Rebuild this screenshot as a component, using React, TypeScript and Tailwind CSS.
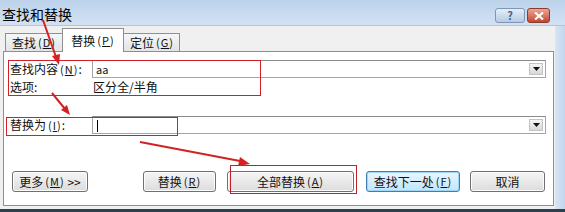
import type { ReactNode } from 'react';

const CJK = "font-['SimSun','Noto_Sans_CJK_SC',sans-serif]";

// letter with an underline, as in the Windows access keys
function Key({ k }: { k: string }) {
  return (
    <span className="ml-[2px] text-[11px] tracking-[1px]">
      (<span className="underline">{k}</span>)
    </span>
  );
}

function Btn({ children, className = '', focused = false }: { children: ReactNode; className?: string; focused?: boolean }) {
  return (
    <div
      className={`h-[21px] flex items-center justify-center rounded-[3px] border text-[12px] text-[#111] ${
        focused
          ? 'border-[#3c7fb1] bg-gradient-to-b from-[#eaf6fd] to-[#bee6fd] shadow-[inset_0_0_0_1px_#9fd6f7]'
          : 'border-[#707070] bg-gradient-to-b from-[#f6f6f6] to-[#dcdcdc] shadow-[inset_0_0_0_1px_#fcfcfc]'
      } ${className}`}
    >
      {children}
    </div>
  );
}

function Combo({ children }: { children?: ReactNode }) {
  return (
    <div className="flex-1 h-[18px] mr-[7px] flex items-center border border-[#a5a5a5] border-t-[#8a8a8a] bg-white pl-[3px] pr-[2px]">
      <div className="flex-1 text-[11px] leading-none">{children}</div>
      <div className="w-[14px] h-[12px] flex items-center justify-center border border-[#c4c4c4] bg-gradient-to-b from-[#f4f4f4] to-[#d8d8d8]">
        <svg width="7" height="4" viewBox="0 0 7 4">
          <path d="M0 0H7L3.5 4Z" fill="#111" />
        </svg>
      </div>
    </div>
  );
}

export default function App() {
  return (
    <div className={`relative w-[565px] h-[212px] overflow-hidden bg-[#cadcef] ${CJK}`}>
      {/* title bar */}
      <div className="h-[26px] flex items-start bg-gradient-to-b from-[#bcd3eb] to-[#d2e2f3] border-b border-[#b0c4da]">
        <span className="ml-[2px] mt-[4px] text-[14px] text-black">查找和替换</span>
        <div className="ml-auto mt-[8px] flex gap-[2px] mr-[15px]">
          <div className="w-[30px] h-[15px] rounded-[3px] border border-[#7f97b5] bg-gradient-to-b from-[#e4eef9] to-[#b5cbe3] flex items-center justify-center text-[11px] leading-none font-bold text-[#4a5f7a]">
            ?
          </div>
          <div className="w-[23px] h-[15px] rounded-[3px] border border-[#8c3b2f] bg-gradient-to-b from-[#e9a797] to-[#c5442b] flex items-center justify-center">
            <svg width="10" height="8" viewBox="0 0 10 8">
              <path d="M1 0.5L9 7.5M9 0.5L1 7.5" stroke="#fff" strokeWidth="2.2" />
            </svg>
          </div>
        </div>
      </div>

      <div className="flex h-[186px]">
        {/* dialog body */}
        <div className="w-[555px] bg-[#f0f0f0] pt-[2px] border-b-[3px] border-[#2c4150]">
          {/* tabs */}
          <div className="flex items-end h-[23px] pl-[5px] text-[12px] text-[#111]">
            <div className="w-[59px] h-[18px] flex items-center pl-[6px] overflow-hidden whitespace-nowrap border border-b-0 border-[#8e8f8f] bg-gradient-to-b from-[#f5f6f8] to-[#e1e4e8]">
              查找<Key k="D" />
            </div>
            <div className="relative z-10 -ml-[2px] -mb-px w-[62px] h-[24px] flex items-center justify-center border border-b-0 border-[#8e8f8f] bg-white">
              替换<Key k="P" />
            </div>
            <div className="w-[56px] h-[18px] flex items-center pl-[6px] border border-l-0 border-b-0 border-[#8e8f8f] bg-gradient-to-b from-[#f5f6f8] to-[#e1e4e8]">
              定位<Key k="G" />
            </div>
          </div>

          {/* panel */}
          <div className="ml-[3px] w-[551px] h-[155px] border border-[#8e8f8f] bg-white pl-[6px] text-[12px] text-[#111]">
            <div className="mt-[8px] h-[18px] flex items-center">
              <span className="w-[82px]">
                查找内容<Key k="N" />:
              </span>
              <Combo>aa</Combo>
            </div>
            <div className="mt-[1px] h-[16px] flex items-center">
              <span className="w-[82px]">选项:</span>
              <span className="pl-[1px]">区分全/半角</span>
            </div>
            <div className="mt-[21px] h-[18px] flex items-center">
              <span className="w-[82px]">
                替换为<Key k="I" />:
              </span>
              <Combo>
                <span className="inline-block w-px h-[12px] bg-black ml-[1px] align-middle" />
              </Combo>
            </div>
            <div className="mt-[37px] flex">
              <Btn className="ml-[2px] w-[76px]">
                更多<Key k="M" />&nbsp;&gt;&gt;
              </Btn>
              <Btn className="ml-[55px] w-[73px]">
                替换<Key k="R" />
              </Btn>
              <Btn className="ml-[11px] w-[127px]">
                全部替换<Key k="A" />
              </Btn>
              <Btn focused className="ml-[12px] w-[94px]">
                查找下一处<Key k="F" />
              </Btn>
              <Btn className="ml-[10px] w-[75px]">取消</Btn>
            </div>
          </div>
        </div>
        {/* right frame */}
        <div className="flex-1 bg-gradient-to-r from-[#d7e5f3] to-[#c2d6ec] border-b-[3px] border-[#2c4150]" />
      </div>

      {/* red annotation boxes */}
      <div className="absolute left-[8px] top-[60px] w-[253px] h-[36px] border border-[#d0202a]" />
      <div className="absolute left-[6px] top-[117px] w-[172px] h-[19px] border border-[#d0202a]" />
      <div className="absolute left-[230px] top-[165px] w-[127px] h-[29px] border border-[#c0202a]" />

      {/* red annotation arrows */}
      <svg className="absolute inset-0 pointer-events-none" width="565" height="212" viewBox="0 0 565 212">
        <g stroke="#d42222" strokeWidth="2" fill="#d42222">
          <line x1="43" y1="20" x2="56" y2="57" />
          <path d="M59 65L52 56L60 54Z" stroke="none" />
          <line x1="52" y1="93" x2="65" y2="109" />
          <path d="M70 115L61 110L67 105Z" stroke="none" />
          <line x1="140" y1="142" x2="240" y2="161" />
          <path d="M250 164L238 166L240 157Z" stroke="none" />
        </g>
      </svg>
    </div>
  );
}
